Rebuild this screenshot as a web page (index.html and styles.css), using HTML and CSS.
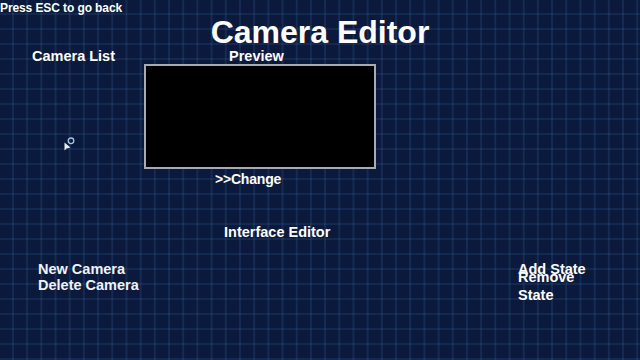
FILE: index.html
```html
<!DOCTYPE html>
<html lang="en">
<head>
  <meta charset="UTF-8">
  <title>Camera Editor</title>
  <link rel="stylesheet" href="styles.css">
</head>
<body>
  <div class="screen">
    <div class="hint">Press ESC to go back</div>
    <h1 class="title">Camera Editor</h1>

    <div class="main">
      <div class="list-col">
        <div class="label">Camera List</div>
      </div>
      <div class="preview-col">
        <div class="label preview-label">Preview</div>
        <div class="preview-box"></div>
        <div class="change">&gt;&gt;Change</div>
        <div class="label interface">Interface Editor</div>
      </div>
    </div>

    <div class="footer">
      <div class="cam-actions">
        <div>New Camera</div>
        <div>Delete Camera</div>
      </div>
      <div class="state-actions">
        <div class="add">Add State</div>
        <div class="remove">Remove State</div>
      </div>
    </div>

    <!-- mouse cursor -->
    <svg class="cursor" width="14" height="16" viewBox="0 0 14 16">
      <path d="M2.5 6.5 L2.5 14.5 L4.6 12.4 L8.5 11.5 Z" fill="#e6ecf5"/>
      <circle cx="9" cy="4.8" r="2.8" fill="none" stroke="#a8c4e0" stroke-width="1.3"/>
    </svg>
  </div>
</body>
</html>
```

FILE: styles.css
```css
body {
  margin: 0;
  width: 640px;
  height: 360px;
  overflow: hidden;
  background-color: #0b1a3c;
  background-image:
    linear-gradient(to right, rgba(70, 125, 195, 0.17) 2px, transparent 2px),
    linear-gradient(to bottom, rgba(70, 125, 195, 0.15) 2px, transparent 2px);
  background-size: 14.2px 15px;
  background-position: 12px 13px;
  font-family: "Liberation Sans", Arial, sans-serif;
  font-weight: bold;
  color: #fff;
}
.screen { position: relative; height: 360px; }
.hint { font-size: 12px; line-height: 16px; height: 16px; letter-spacing: -0.1px; }
.title {
  margin: 0;
  text-align: center;
  font-size: 32px;
  line-height: 32px;
}
.label { font-size: 14.5px; line-height: 16px; }
.main { display: flex; }
.list-col { width: 144px; padding-left: 32px; box-sizing: border-box; }
.preview-col { display: flex; flex-direction: column; align-items: flex-start; }
.preview-label { margin-left: 85px; }
.preview-box {
  width: 228px;
  height: 101px;
  background: #000;
  border: 2px solid #a6abb5;
}
.change { font-size: 14px; line-height: 16px; margin: 2px 0 0 71px; letter-spacing: -0.2px; }
.interface { margin: 37px 0 0 80px; }
.footer { display: flex; margin-top: 21px; font-size: 14.5px; }
.cam-actions { padding-left: 38px; line-height: 16px; color: #eef2f8; }
.state-actions { margin-left: auto; margin-right: 50px; width: 72px; }
.add { line-height: 16px; }
.remove { line-height: 17.5px; margin-top: -8px; }
.cursor { position: absolute; left: 62px; top: 136px; }
```
